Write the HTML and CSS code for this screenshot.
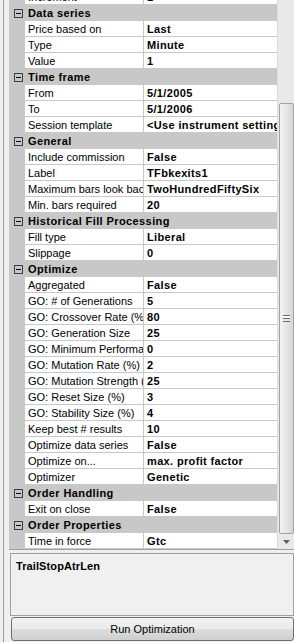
FILE: index.html
```html
<!DOCTYPE html>
<html lang="en">
<head>
    <meta charset="UTF-8">
    <meta name="viewport" content="width=device-width, initial-scale=1.0">
    <title>Strategy Optimizer</title>
    <link rel="stylesheet" href="styles.css">
</head>
<body>
    <div class="app">
        <div class="splitter"></div>
        <div class="main">
            <div class="grid">
                <div class="rows">
                    <div class="row"><span class="gutter"></span><span class="name">Increment</span><span class="value">1</span></div>

                    <div class="cat"><span class="gutter"><svg class="toggle" width="9" height="9" viewBox="0 0 9 9"><rect x="0.5" y="0.5" width="8" height="8" fill="none" stroke="#3c3c3c"/><path d="M2 4.5h5" stroke="#000"/></svg></span><span class="cat-title">Data series</span></div>
                    <div class="row"><span class="gutter"></span><span class="name">Price based on</span><span class="value">Last</span></div>
                    <div class="row"><span class="gutter"></span><span class="name">Type</span><span class="value">Minute</span></div>
                    <div class="row"><span class="gutter"></span><span class="name">Value</span><span class="value">1</span></div>

                    <div class="cat"><span class="gutter"><svg class="toggle" width="9" height="9" viewBox="0 0 9 9"><rect x="0.5" y="0.5" width="8" height="8" fill="none" stroke="#3c3c3c"/><path d="M2 4.5h5" stroke="#000"/></svg></span><span class="cat-title">Time frame</span></div>
                    <div class="row"><span class="gutter"></span><span class="name">From</span><span class="value">5/1/2005</span></div>
                    <div class="row"><span class="gutter"></span><span class="name">To</span><span class="value">5/1/2006</span></div>
                    <div class="row"><span class="gutter"></span><span class="name">Session template</span><span class="value">&lt;Use instrument settings&gt;</span></div>

                    <div class="cat"><span class="gutter"><svg class="toggle" width="9" height="9" viewBox="0 0 9 9"><rect x="0.5" y="0.5" width="8" height="8" fill="none" stroke="#3c3c3c"/><path d="M2 4.5h5" stroke="#000"/></svg></span><span class="cat-title">General</span></div>
                    <div class="row"><span class="gutter"></span><span class="name">Include commission</span><span class="value">False</span></div>
                    <div class="row"><span class="gutter"></span><span class="name">Label</span><span class="value">TFbkexits1</span></div>
                    <div class="row"><span class="gutter"></span><span class="name">Maximum bars look back</span><span class="value">TwoHundredFiftySix</span></div>
                    <div class="row"><span class="gutter"></span><span class="name">Min. bars required</span><span class="value">20</span></div>

                    <div class="cat"><span class="gutter"><svg class="toggle" width="9" height="9" viewBox="0 0 9 9"><rect x="0.5" y="0.5" width="8" height="8" fill="none" stroke="#3c3c3c"/><path d="M2 4.5h5" stroke="#000"/></svg></span><span class="cat-title">Historical Fill Processing</span></div>
                    <div class="row"><span class="gutter"></span><span class="name">Fill type</span><span class="value">Liberal</span></div>
                    <div class="row"><span class="gutter"></span><span class="name">Slippage</span><span class="value">0</span></div>

                    <div class="cat"><span class="gutter"><svg class="toggle" width="9" height="9" viewBox="0 0 9 9"><rect x="0.5" y="0.5" width="8" height="8" fill="none" stroke="#3c3c3c"/><path d="M2 4.5h5" stroke="#000"/></svg></span><span class="cat-title">Optimize</span></div>
                    <div class="row"><span class="gutter"></span><span class="name">Aggregated</span><span class="value">False</span></div>
                    <div class="row"><span class="gutter"></span><span class="name">GO: # of Generations</span><span class="value">5</span></div>
                    <div class="row"><span class="gutter"></span><span class="name">GO: Crossover Rate (%)</span><span class="value">80</span></div>
                    <div class="row"><span class="gutter"></span><span class="name">GO: Generation Size</span><span class="value">25</span></div>
                    <div class="row"><span class="gutter"></span><span class="name">GO: Minimum Performance</span><span class="value">0</span></div>
                    <div class="row"><span class="gutter"></span><span class="name">GO: Mutation Rate (%)</span><span class="value">2</span></div>
                    <div class="row"><span class="gutter"></span><span class="name">GO: Mutation Strength (%)</span><span class="value">25</span></div>
                    <div class="row"><span class="gutter"></span><span class="name">GO: Reset Size (%)</span><span class="value">3</span></div>
                    <div class="row"><span class="gutter"></span><span class="name">GO: Stability Size (%)</span><span class="value">4</span></div>
                    <div class="row"><span class="gutter"></span><span class="name">Keep best # results</span><span class="value">10</span></div>
                    <div class="row"><span class="gutter"></span><span class="name">Optimize data series</span><span class="value">False</span></div>
                    <div class="row"><span class="gutter"></span><span class="name">Optimize on...</span><span class="value">max. profit factor</span></div>
                    <div class="row"><span class="gutter"></span><span class="name">Optimizer</span><span class="value">Genetic</span></div>

                    <div class="cat"><span class="gutter"><svg class="toggle" width="9" height="9" viewBox="0 0 9 9"><rect x="0.5" y="0.5" width="8" height="8" fill="none" stroke="#3c3c3c"/><path d="M2 4.5h5" stroke="#000"/></svg></span><span class="cat-title">Order Handling</span></div>
                    <div class="row"><span class="gutter"></span><span class="name">Exit on close</span><span class="value">False</span></div>

                    <div class="cat"><span class="gutter"><svg class="toggle" width="9" height="9" viewBox="0 0 9 9"><rect x="0.5" y="0.5" width="8" height="8" fill="none" stroke="#3c3c3c"/><path d="M2 4.5h5" stroke="#000"/></svg></span><span class="cat-title">Order Properties</span></div>
                    <div class="row"><span class="gutter"></span><span class="name">Time in force</span><span class="value">Gtc</span></div>
                </div>

                <div class="vscroll">
                    <div class="thumb"><span class="grip"></span></div>
                    <div class="arrow-down">
                        <svg width="7" height="4" viewBox="0 0 7 4"><path d="M0 0h7L3.5 4z" fill="#606060"/></svg>
                    </div>
                </div>
            </div>

            <div class="desc">
                <div class="desc-title">TrailStopAtrLen</div>
            </div>

            <button class="run-button">Run Optimization</button>
        </div>
    </div>
</body>
</html>
```

FILE: styles.css
```css
body {
    margin: 0;
    background: #f0f0f0;
    font-family: "Liberation Sans", Arial, sans-serif;
    font-size: 11px;
    color: #000;
}
.app {
    display: flex;
    height: 642px;
    overflow: hidden;
}
.splitter {
    width: 9px;
    flex: none;
    background: linear-gradient(to right, transparent 3px, #a0a0a0 3px, #a0a0a0 4px, transparent 4px);
}
.main {
    width: 285px;
    display: flex;
    flex-direction: column;
}

/* property grid */
.grid {
    display: flex;
    height: 549px;
    border-bottom: 1px solid #a0a0a0;
    overflow: hidden;
}
.rows {
    width: 268px;
    margin-top: -11px;
    background: #c8c8c8;
}
.row,
.cat {
    display: flex;
    height: 16px;
    box-sizing: border-box;
}
.gutter {
    width: 16px;
    flex: none;
    background: #c8c8c8;
    display: flex;
    align-items: flex-start;
    justify-content: center;
}
.toggle {
    margin-top: 4px;
    margin-left: 2px;
}
.name,
.value {
    background: #fff;
    border-bottom: 1px solid #c8c8c8;
    padding: 1px 0 0 3px;
    line-height: 14px;
    white-space: nowrap;
    overflow: hidden;
    box-sizing: border-box;
}
.name {
    width: 118px;
    flex: none;
}
.value {
    flex: 1;
    border-left: 1px solid #c8c8c8;
    font-weight: bold;
    letter-spacing: 0.35px;
}
.cat-title {
    padding: 1px 0 0 3px;
    line-height: 14px;
    font-weight: bold;
    letter-spacing: 0.4px;
    white-space: nowrap;
}

/* scrollbar */
.vscroll {
    width: 17px;
    flex: none;
    background: #e9e9e9;
    border-left: 1px solid #dcdcdc;
    box-sizing: border-box;
    display: flex;
    flex-direction: column;
    align-items: center;
}
.thumb {
    margin-top: 103px;
    width: 15px;
    height: 431px;
    box-sizing: border-box;
    border: 1px solid #a2a2a2;
    border-radius: 2px;
    background: linear-gradient(to right, #f3f3f3, #e6e6e6 50%, #d6d6d6);
    display: flex;
    align-items: center;
    justify-content: center;
}
.grip {
    width: 7px;
    height: 5px;
    border-top: 1px solid #6a6a6a;
    border-bottom: 1px solid #6a6a6a;
    background: linear-gradient(#fff 2px, #6a6a6a 2px, #6a6a6a 3px, transparent 3px);
}
.arrow-down {
    margin-top: auto;
    height: 15px;
    display: flex;
    align-items: center;
    justify-content: center;
}

/* description pane */
.desc {
    margin: 3px 0 0 1px;
    height: 63px;
    box-sizing: border-box;
    border: 1px solid #a0a0a0;
    padding: 6px 5px;
}
.desc-title {
    font-weight: bold;
    letter-spacing: 0.1px;
}

.run-button {
    margin: 1px 0 0 2px;
    width: 283px;
    height: 24px;
    border: 1px solid #707070;
    border-radius: 3px;
    background: linear-gradient(#f2f2f2 0%, #ebebeb 50%, #dddddd 50%, #cfcfcf 100%);
    font-family: "Liberation Sans", Arial, sans-serif;
    font-size: 11px;
    color: #000;
    padding: 0;
}
```
